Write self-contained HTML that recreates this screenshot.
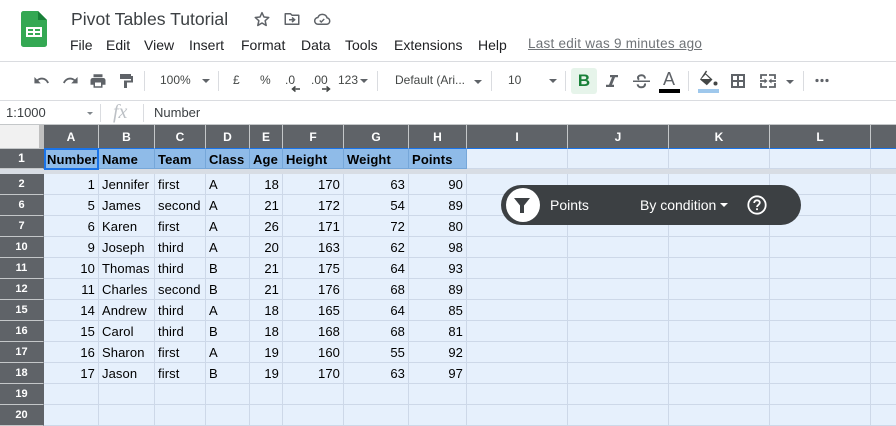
<!DOCTYPE html>
<html><head><meta charset="utf-8">
<style>
html,body{margin:0;padding:0;background:#fff;}
body{width:896px;height:423px;overflow:hidden;position:relative;font-family:"Liberation Sans",Arial,sans-serif;color:#202124;}
.a{position:absolute;white-space:nowrap;}
.m{top:37px;font-size:14px;line-height:16px;color:#202124;}
.t{top:73px;font-size:12px;line-height:14px;color:#444746;}
.sep{position:absolute;top:71px;width:1px;height:20px;background:#dadce0;}
.car{position:absolute;width:0;height:0;border-left:4px solid transparent;border-right:4px solid transparent;border-top:4px solid #5f6368;}
svg{position:absolute;}
table{position:absolute;left:0;top:125px;border-collapse:separate;border-spacing:0;table-layout:fixed;width:972px;font-size:13px;}
td,th{box-sizing:border-box;padding:2px 3px 0;overflow:hidden;white-space:nowrap;border-right:1px solid #cdd8e8;border-bottom:1px solid #cdd8e8;background:#e6f0fc;font-weight:normal;color:#000;height:21px;line-height:18px;letter-spacing:.1px;}
tr.h th{background:#5f6368;color:#fff;font-size:12px;font-weight:bold;height:24px;padding:0 3px;border-right:1px solid #c4c7c9;border-bottom:1px solid #1a73e8;text-align:center;line-height:22px;letter-spacing:0;}
th.r{background:#5f6368;color:#fff;font-size:11px;font-weight:bold;text-align:center;border-right:1px solid #5f6368;border-bottom:1px solid #c4c7c9;padding:0;line-height:20px;letter-spacing:0;}
td.n{text-align:right;}
tr.s th{height:20px;padding-top:0;line-height:19px;}
tr.s td{height:20px;padding-top:2px;line-height:17px;background:#8fbbe8;font-weight:bold;border-right:1px solid #76a7d9;border-bottom:1px solid #76a7d9;letter-spacing:.15px;}
tr.s td.e{background:#e6f0fc;border-right:1px solid #cdd8e8;border-bottom:1px solid #cdd8e8;}
tr.b td{height:5px;padding:0;background:#d8dde4;border:0;line-height:0;font-size:0;}
</style></head>
<body>
<!-- logo -->
<svg style="left:21px;top:11px" width="26" height="36" viewBox="0 0 26 36">
<path d="M2.500 0H17L26 9V33.500A2.500 2.500 0 0 1 23.500 36H2.500A2.500 2.500 0 0 1 0 33.500V2.500A2.500 2.500 0 0 1 2.500 0Z" fill="#34a853"/>
<path d="M17 0L26 9H17Z" fill="#188038"/>
<path d="M5 16H21V26H5ZM7 18V20H12V18ZM14 18V20H19V18ZM7 22V24H12V22ZM14 22V24H19V22Z" fill="#fff" fill-rule="evenodd"/>
</svg>
<div class="a" style="left:71px;top:8px;font-size:17.6px;line-height:22px;color:#3c4043">Pivot Tables Tutorial</div>
<!-- star -->
<svg style="left:253px;top:10px" width="18" height="18" viewBox="0 0 24 24"><path d="M12 3.500L14.600 9.300L21 10L16.200 14.300L17.600 20.600L12 17.300L6.400 20.600L7.800 14.300L3 10L9.400 9.300Z" fill="none" stroke="#5f6368" stroke-width="2" stroke-linejoin="round"/></svg>
<!-- move folder -->
<svg style="left:283px;top:10px" width="18" height="18" viewBox="0 0 24 24"><path d="M3 5H10L12 7H21V19H3Z" fill="none" stroke="#5f6368" stroke-width="2" stroke-linejoin="round"/><path d="M8 13H14M12 10L15.500 13L12 16" fill="none" stroke="#5f6368" stroke-width="2"/></svg>
<!-- cloud -->
<svg style="left:313px;top:10px" width="18" height="18" viewBox="0 0 24 24"><path d="M7 19A4.500 4.500 0 0 1 6.500 10A6.500 6.500 0 0 1 18.800 10.500A4.300 4.300 0 0 1 18.500 19Z" fill="none" stroke="#5f6368" stroke-width="2"/><path d="M9 14L11 16L15 12" fill="none" stroke="#5f6368" stroke-width="1.800"/></svg>
<!-- menu -->
<div class="a m" style="left:70px">File</div>
<div class="a m" style="left:106px">Edit</div>
<div class="a m" style="left:144px">View</div>
<div class="a m" style="left:189px">Insert</div>
<div class="a m" style="left:241px">Format</div>
<div class="a m" style="left:301px">Data</div>
<div class="a m" style="left:345px">Tools</div>
<div class="a m" style="left:394px">Extensions</div>
<div class="a m" style="left:478px">Help</div>
<div class="a m" style="left:528px;color:#6f7377;text-decoration:underline;font-size:13.500px;letter-spacing:.25px;top:36px">Last edit was 9 minutes ago</div>
<!-- toolbar lines -->
<div class="a" style="left:0;top:61px;width:896px;height:1px;background:#dadce0"></div>
<div class="a" style="left:0;top:100px;width:896px;height:1px;background:#dadce0"></div>
<!-- undo/redo/print/paint -->
<svg style="left:33px;top:72px" width="17" height="17" viewBox="0 0 24 24"><path d="M12.500 8C9.850 8 7.450 9 5.600 10.600L2 7V16H11L7.380 12.380C8.770 11.220 10.540 10.500 12.500 10.500C16.040 10.500 19.050 12.810 20.100 16L22.470 15.220C21.080 11.030 17.150 8 12.500 8Z" fill="#5f6368"/></svg>
<svg style="left:62px;top:72px" width="17" height="17" viewBox="0 0 24 24"><path d="M18.400 10.600C16.550 9 14.150 8 11.500 8C6.850 8 2.920 11.030 1.540 15.220L3.900 16C4.950 12.810 7.950 10.500 11.500 10.500C13.450 10.500 15.230 11.220 16.620 12.380L13 16H22V7Z" fill="#5f6368"/></svg>
<svg style="left:89px;top:72px" width="18" height="18" viewBox="0 0 24 24"><path d="M19 8H5C3.340 8 2 9.340 2 11V17H6V21H18V17H22V11C22 9.340 20.660 8 19 8ZM16 19H8V14H16ZM18 3H6V7H18Z" fill="#5f6368"/></svg>
<svg style="left:120px;top:74px" width="13" height="14" viewBox="0 0 13 14"><path d="M0 0H11V2H13V8.500H7V14H4V6.500H11V5H0Z" fill="#5f6368"/></svg>
<div class="sep" style="left:144px"></div>
<div class="a t" style="left:160px">100%</div>
<div class="car" style="left:202px;top:79px"></div>
<div class="sep" style="left:218px"></div>
<div class="a t" style="left:233px">£</div>
<div class="a t" style="left:260px">%</div>
<div class="a t" style="left:285px">.0</div>
<svg style="left:291px;top:85px" width="10" height="8" viewBox="0 0 10 8"><path d="M9 4H2M4.500 1.500L1.500 4L4.500 6.500" fill="none" stroke="#444746" stroke-width="1.500"/></svg>
<div class="a t" style="left:311px">.00</div>
<svg style="left:321px;top:85px" width="10" height="8" viewBox="0 0 10 8"><path d="M1 4H8M5.500 1.500L8.500 4L5.500 6.500" fill="none" stroke="#444746" stroke-width="1.500"/></svg>
<div class="a t" style="left:338px">123</div>
<div class="car" style="left:360px;top:79px"></div>
<div class="sep" style="left:377px"></div>
<div class="a t" style="left:395px">Default (Ari...</div>
<div class="car" style="left:474px;top:80px"></div>
<div class="sep" style="left:491px"></div>
<div class="a t" style="left:508px">10</div>
<div class="car" style="left:549px;top:79px"></div>
<div class="sep" style="left:565px"></div>
<div class="a" style="left:571px;top:68px;width:26px;height:26px;background:#e6f4ea;border-radius:3px"></div>
<div class="a" style="left:571px;top:72px;width:26px;text-align:center;font-size:17px;line-height:18px;font-weight:bold;color:#188038">B</div>
<svg style="left:606px;top:75px" width="12" height="12" viewBox="0 0 12 12"><path d="M4 0H12V2.200H9L6 9.800H8V12H0V9.800H3L6 2.200H4Z" fill="#5f6368"/></svg>
<svg style="left:633px;top:74px" width="17" height="15" viewBox="0 0 17 15"><path d="M0 6.500H17V8H0Z" fill="#5f6368"/><path d="M12 4.500C12 2.500 10.500 1.300 8.500 1.300C6.500 1.300 5 2.300 5 3.800C5 4.600 5.300 5.200 5.900 5.800M12 9.500C12.300 11.800 10.700 13.300 8.500 13.300C6.500 13.300 4.800 12.200 4.600 10.300" fill="none" stroke="#5f6368" stroke-width="2"/></svg>
<div class="a" style="left:658px;top:69px;width:22px;text-align:center;font-size:18px;line-height:20px;color:#5f6368">A</div>
<div class="a" style="left:659px;top:89px;width:21px;height:4px;background:#000"></div>
<div class="sep" style="left:688px"></div>
<svg style="left:699px;top:70px" width="20" height="17" viewBox="0 0 20 17"><path d="M7 0.500L8.200 1.700L6.700 3.200L13.500 9.500L7.800 15.200L1 9.500Z" fill="#444746"/><path d="M6.500 4.500L11 9H2.300Z" fill="#fff"/><circle cx="16.500" cy="13.500" r="2" fill="#444746"/></svg>
<div class="a" style="left:698px;top:89px;width:21px;height:4px;background:#9fc8ec"></div>
<svg style="left:730px;top:73px" width="16" height="16" viewBox="0 0 16 16"><path d="M1 1H15V15H1ZM3 3V7H7V3ZM9 3V7H13V3ZM3 9V13H7V9ZM9 9V13H13V9Z" fill="#5f6368" fill-rule="evenodd"/></svg>
<svg style="left:760px;top:74px" width="16" height="14" viewBox="0 0 16 14"><path d="M1 5V1H7M9 1H15V5M1 9V13H7M9 13H15V9M0 7H4.500M11.500 7H16" fill="none" stroke="#5f6368" stroke-width="1.800"/><path d="M4.500 4.500L7.500 7L4.500 9.500ZM11.500 4.500L8.500 7L11.500 9.500Z" fill="#5f6368"/></svg>
<div class="car" style="left:786px;top:80px"></div>
<div class="sep" style="left:803px"></div>
<svg style="left:815px;top:78px" width="15" height="5" viewBox="0 0 15 5"><circle cx="2" cy="2.500" r="1.600" fill="#5f6368"/><circle cx="7" cy="2.500" r="1.600" fill="#5f6368"/><circle cx="12" cy="2.500" r="1.600" fill="#5f6368"/></svg>
<!-- formula bar -->
<div class="a" style="left:6px;top:105px;font-size:13px;line-height:15px;color:#3c4043">1:1000</div>
<div class="car" style="left:87px;top:112px;border-left-width:3px;border-right-width:3px;border-top-width:3px;border-top-color:#80868b"></div>
<div class="a" style="left:100px;top:104px;width:1px;height:18px;background:#dadce0"></div>
<div class="a" style="left:113px;top:101px;font:italic 20px/22px 'Liberation Serif',serif;color:#bdc1c6">fx</div>
<div class="a" style="left:143px;top:104px;width:1px;height:18px;background:#dadce0"></div>
<div class="a" style="left:154px;top:105px;font-size:13px;line-height:15px;color:#3c4043">Number</div>
<!-- corner -->
<div class="a" style="left:0;top:124px;width:896px;height:1px;background:#c4c7c9"></div>
<!-- grid -->
<table>
<colgroup><col style="width:44px"><col style="width:55px"><col style="width:56px"><col style="width:51px"><col style="width:44px"><col style="width:33px"><col style="width:61px"><col style="width:65px"><col style="width:58px"><col style="width:101px"><col style="width:101px"><col style="width:101px"><col style="width:101px"><col style="width:101px"></colgroup>
<tr class="h"><th style="background:#f1f1f1;border-right:5px solid #c0c0c0;border-bottom:1px solid #c4c7c9"></th><th>A</th><th>B</th><th>C</th><th>D</th><th>E</th><th>F</th><th>G</th><th>H</th><th>I</th><th>J</th><th>K</th><th>L</th><th></th></tr>
<tr class="s"><th class="r" style="font-size:12px">1</th><td>Number</td><td>Name</td><td>Team</td><td>Class</td><td>Age</td><td>Height</td><td>Weight</td><td>Points</td><td class="e"></td><td class="e"></td><td class="e"></td><td class="e"></td><td class="e"></td></tr>
<tr class="b"><td colspan="14"></td></tr>
<tr><th class="r">2</th><td class="n">1</td><td>Jennifer</td><td>first</td><td>A</td><td class="n">18</td><td class="n">170</td><td class="n">63</td><td class="n">90</td><td></td><td></td><td></td><td></td><td></td></tr>
<tr><th class="r">6</th><td class="n">5</td><td>James</td><td>second</td><td>A</td><td class="n">21</td><td class="n">172</td><td class="n">54</td><td class="n">89</td><td></td><td></td><td></td><td></td><td></td></tr>
<tr><th class="r">7</th><td class="n">6</td><td>Karen</td><td>first</td><td>A</td><td class="n">26</td><td class="n">171</td><td class="n">72</td><td class="n">80</td><td></td><td></td><td></td><td></td><td></td></tr>
<tr><th class="r">10</th><td class="n">9</td><td>Joseph</td><td>third</td><td>A</td><td class="n">20</td><td class="n">163</td><td class="n">62</td><td class="n">98</td><td></td><td></td><td></td><td></td><td></td></tr>
<tr><th class="r">11</th><td class="n">10</td><td>Thomas</td><td>third</td><td>B</td><td class="n">21</td><td class="n">175</td><td class="n">64</td><td class="n">93</td><td></td><td></td><td></td><td></td><td></td></tr>
<tr><th class="r">12</th><td class="n">11</td><td>Charles</td><td>second</td><td>B</td><td class="n">21</td><td class="n">176</td><td class="n">68</td><td class="n">89</td><td></td><td></td><td></td><td></td><td></td></tr>
<tr><th class="r">15</th><td class="n">14</td><td>Andrew</td><td>third</td><td>A</td><td class="n">18</td><td class="n">165</td><td class="n">64</td><td class="n">85</td><td></td><td></td><td></td><td></td><td></td></tr>
<tr><th class="r">16</th><td class="n">15</td><td>Carol</td><td>third</td><td>B</td><td class="n">18</td><td class="n">168</td><td class="n">68</td><td class="n">81</td><td></td><td></td><td></td><td></td><td></td></tr>
<tr><th class="r">17</th><td class="n">16</td><td>Sharon</td><td>first</td><td>A</td><td class="n">19</td><td class="n">160</td><td class="n">55</td><td class="n">92</td><td></td><td></td><td></td><td></td><td></td></tr>
<tr><th class="r">18</th><td class="n">17</td><td>Jason</td><td>first</td><td>B</td><td class="n">19</td><td class="n">170</td><td class="n">63</td><td class="n">97</td><td></td><td></td><td></td><td></td><td></td></tr>
<tr><th class="r">19</th><td></td><td></td><td></td><td></td><td></td><td></td><td></td><td></td><td></td><td></td><td></td><td></td><td></td></tr>
<tr><th class="r">20</th><td></td><td></td><td></td><td></td><td></td><td></td><td></td><td></td><td></td><td></td><td></td><td></td><td></td></tr>
</table>
<!-- A1 selection -->
<div class="a" style="left:44px;top:148px;width:55px;height:22px;box-sizing:border-box;border:2px solid #1a73e8"></div>
<!-- filter pill -->
<div class="a" style="left:501px;top:185px;width:300px;height:40px;border-radius:20px;background:#3c4043"></div>
<div class="a" style="left:506px;top:188px;width:34px;height:34px;border-radius:50%;background:#fff"></div>
<svg style="left:513px;top:197px" width="18" height="17" viewBox="0 0 18 17"><path d="M1 1H17L11 8.500V16H7V8.500Z" fill="#3c4043"/></svg>
<div class="a" style="left:550px;top:197px;font-size:14px;line-height:16px;color:#fff">Points</div>
<div class="a" style="left:640px;top:197px;font-size:14px;line-height:16px;color:#fff">By condition</div>
<div class="car" style="left:720px;top:203px;border-top-color:#fff"></div>
<svg style="left:747px;top:195px" width="20" height="20" viewBox="0 0 20 20"><circle cx="10" cy="10" r="8.700" fill="none" stroke="#fff" stroke-width="1.800"/><path d="M7.200 8C7.200 6.300 8.400 5.300 10 5.300C11.600 5.300 12.800 6.300 12.800 7.800C12.800 9.700 10 9.900 10 12" fill="none" stroke="#fff" stroke-width="1.800"/><rect x="9.100" y="13.300" width="1.800" height="1.800" fill="#fff"/></svg>
</body></html>
